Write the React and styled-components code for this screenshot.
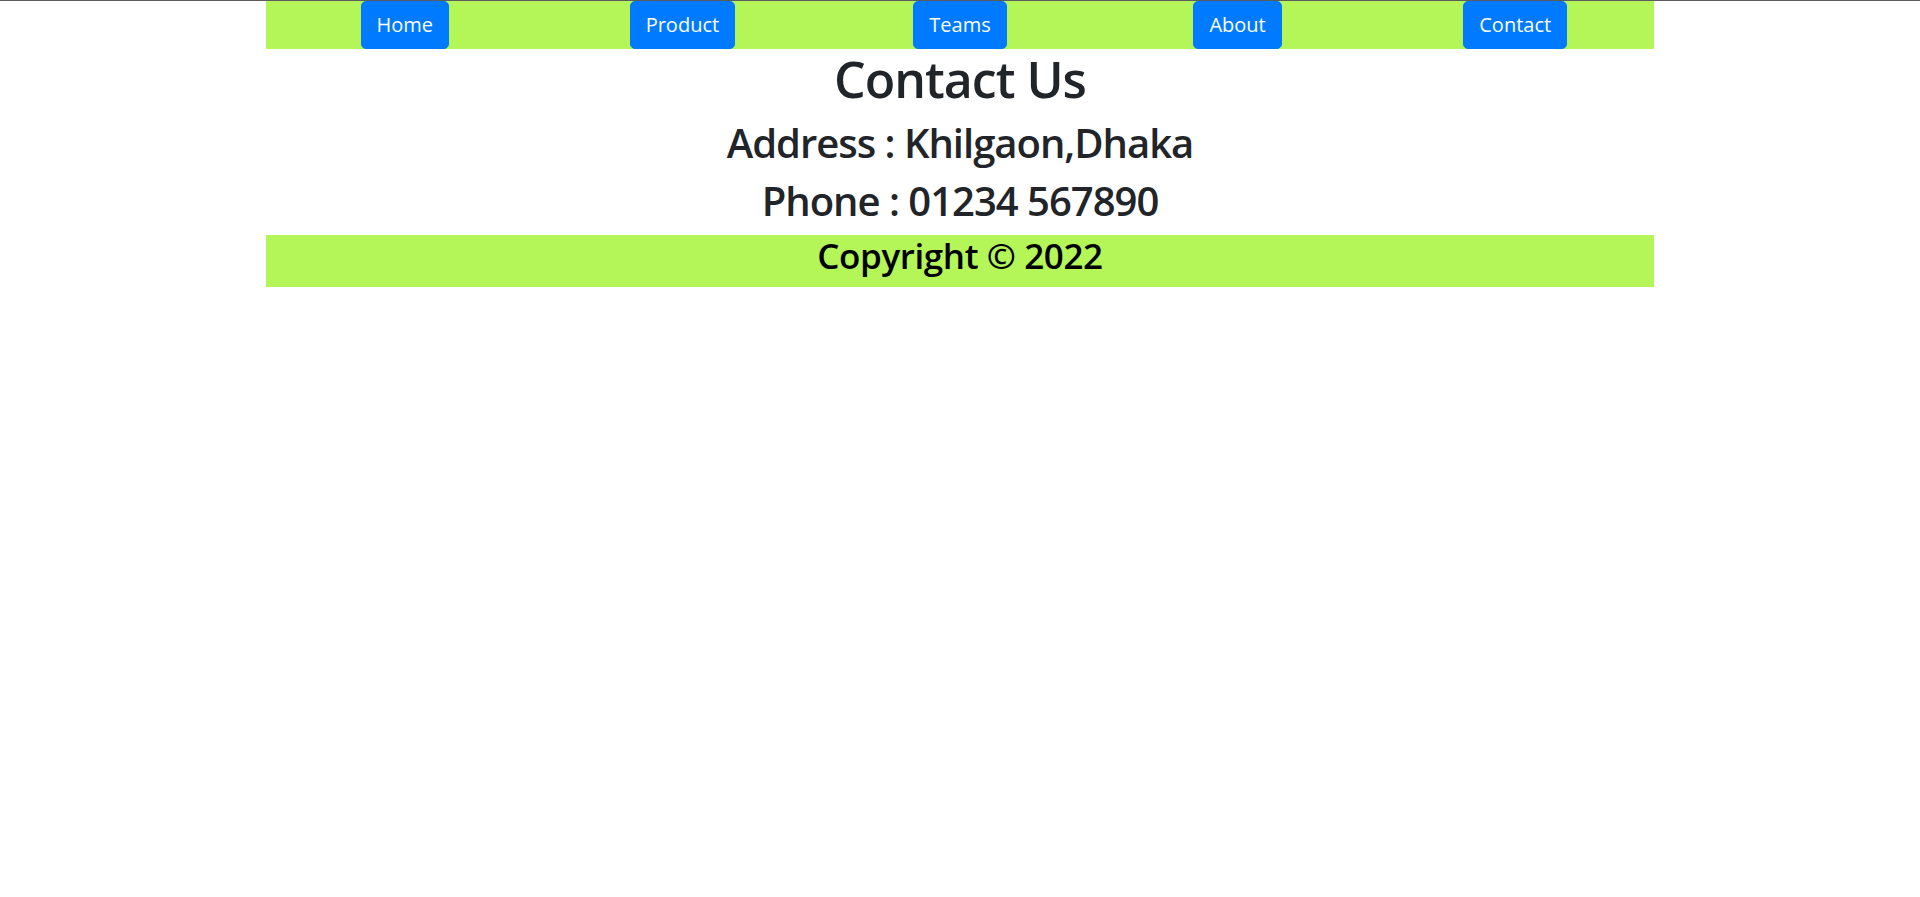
import styled, { createGlobalStyle } from 'styled-components';

const GlobalStyle = createGlobalStyle`
  * {
    box-sizing: border-box;
  }

  body {
    margin: 0;
    border-top: 1px solid #5c5c5c;
    font-family: "Open Sans", "Noto Sans", Arial, sans-serif;
    font-size: 20px;
    line-height: 1.5;
    color: #212529;
    background: #fff;
  }
`;

const Page = styled.div`
  max-width: 1388px;
  margin: 0 auto;
`;

const NavBar = styled.nav`
  display: grid;
  grid-template-columns: repeat(5, 1fr);
  justify-items: center;
  background-color: #b4f658;
`;

const NavButton = styled.button`
  height: 48px;
  padding: 0 15px;
  border: 1px solid #007bff;
  border-radius: 5px;
  background-color: #007bff;
  color: #fff;
  font-family: inherit;
  font-size: 20px;
  line-height: 1.5;
  cursor: pointer;
`;

const Content = styled.main`
  text-align: center;
`;

const Title = styled.h1`
  margin: 0 0 10px;
  font-size: 50px;
  font-weight: 600;
  line-height: 1.2;
  letter-spacing: -1px;
`;

const InfoLine = styled.h2`
  margin: 0 0 10px;
  font-size: 40px;
  font-weight: 600;
  line-height: 1.2;
  letter-spacing: -1px;
`;

const Footer = styled.footer`
  display: flow-root;
  background-color: #b4f658;
  text-align: center;
`;

const FooterText = styled.h3`
  margin: 0 0 10px;
  font-size: 35px;
  font-weight: 600;
  line-height: 1.2;
  letter-spacing: -0.4px;
  color: #000;
`;

const links = ['Home', 'Product', 'Teams', 'About', 'Contact'];

export default function App() {
  return (
    <>
      <GlobalStyle />
      <Page>
        <NavBar>
          {links.map((link) => (
            <NavButton key={link}>{link}</NavButton>
          ))}
        </NavBar>
        <Content>
          <Title>Contact Us</Title>
          <InfoLine>Address : Khilgaon,Dhaka</InfoLine>
          <InfoLine>Phone : 01234 567890</InfoLine>
        </Content>
        <Footer>
          <FooterText>Copyright © 2022</FooterText>
        </Footer>
      </Page>
    </>
  );
}
